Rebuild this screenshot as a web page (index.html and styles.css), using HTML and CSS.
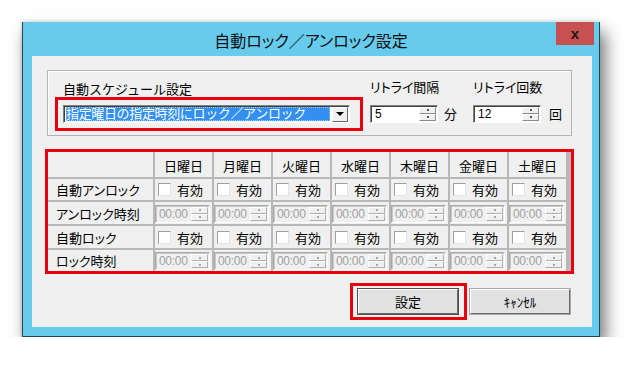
FILE: index.html
```html
<!DOCTYPE html>
<html lang="ja">
<head>
    <meta charset="UTF-8">
    <title>自動ロック／アンロック設定</title>
    <link rel="stylesheet" href="styles.css">
</head>
<body>
<div class="window">
    <div class="titlebar">
        <span class="title">自動ロック／アンロック設定</span>
        <span class="close">x</span>
    </div>
    <div class="client">
        <div class="group">
            <div class="sched">
                <div class="label sched-label">自動スケジュール設定</div>
                <div class="mark mark-select">
                    <div class="select">
                        <span class="select-value">指定曜日の指定時刻にロック／アンロック</span>
                        <span class="select-arrow"></span>
                    </div>
                </div>
            </div>
            <div class="retry">
                <div class="label">リトライ間隔</div>
                <div class="retry-row">
                    <div class="spin spin-retry">
                        <span class="spin-value">5</span>
                        <span class="spin-btns"><i></i><i></i></span>
                    </div>
                    <span class="unit">分</span>
                </div>
            </div>
            <div class="retry retry-count">
                <div class="label">リトライ回数</div>
                <div class="retry-row">
                    <div class="spin spin-retry">
                        <span class="spin-value">12</span>
                        <span class="spin-btns"><i></i><i></i></span>
                    </div>
                    <span class="unit unit-count">回</span>
                </div>
            </div>
        </div>

        <div class="mark mark-table">
            <div class="grid">
                <div class="cell head"></div>
                <div class="cell head">日曜日</div>
                <div class="cell head">月曜日</div>
                <div class="cell head">火曜日</div>
                <div class="cell head">水曜日</div>
                <div class="cell head">木曜日</div>
                <div class="cell head">金曜日</div>
                <div class="cell head">土曜日</div>

                <div class="cell name">自動アンロック</div>
                <div class="cell check"><span class="box"></span>有効</div>
                <div class="cell check"><span class="box"></span>有効</div>
                <div class="cell check"><span class="box"></span>有効</div>
                <div class="cell check"><span class="box"></span>有効</div>
                <div class="cell check"><span class="box"></span>有効</div>
                <div class="cell check"><span class="box"></span>有効</div>
                <div class="cell check"><span class="box"></span>有効</div>

                <div class="cell name">アンロック時刻</div>
                <div class="cell time"><div class="spin spin-off"><span class="spin-value">00:00</span><span class="spin-btns"><i></i><i></i></span></div></div>
                <div class="cell time"><div class="spin spin-off"><span class="spin-value">00:00</span><span class="spin-btns"><i></i><i></i></span></div></div>
                <div class="cell time"><div class="spin spin-off"><span class="spin-value">00:00</span><span class="spin-btns"><i></i><i></i></span></div></div>
                <div class="cell time"><div class="spin spin-off"><span class="spin-value">00:00</span><span class="spin-btns"><i></i><i></i></span></div></div>
                <div class="cell time"><div class="spin spin-off"><span class="spin-value">00:00</span><span class="spin-btns"><i></i><i></i></span></div></div>
                <div class="cell time"><div class="spin spin-off"><span class="spin-value">00:00</span><span class="spin-btns"><i></i><i></i></span></div></div>
                <div class="cell time"><div class="spin spin-off"><span class="spin-value">00:00</span><span class="spin-btns"><i></i><i></i></span></div></div>

                <div class="cell name">自動ロック</div>
                <div class="cell check"><span class="box"></span>有効</div>
                <div class="cell check"><span class="box"></span>有効</div>
                <div class="cell check"><span class="box"></span>有効</div>
                <div class="cell check"><span class="box"></span>有効</div>
                <div class="cell check"><span class="box"></span>有効</div>
                <div class="cell check"><span class="box"></span>有効</div>
                <div class="cell check"><span class="box"></span>有効</div>

                <div class="cell name">ロック時刻</div>
                <div class="cell time"><div class="spin spin-off"><span class="spin-value">00:00</span><span class="spin-btns"><i></i><i></i></span></div></div>
                <div class="cell time"><div class="spin spin-off"><span class="spin-value">00:00</span><span class="spin-btns"><i></i><i></i></span></div></div>
                <div class="cell time"><div class="spin spin-off"><span class="spin-value">00:00</span><span class="spin-btns"><i></i><i></i></span></div></div>
                <div class="cell time"><div class="spin spin-off"><span class="spin-value">00:00</span><span class="spin-btns"><i></i><i></i></span></div></div>
                <div class="cell time"><div class="spin spin-off"><span class="spin-value">00:00</span><span class="spin-btns"><i></i><i></i></span></div></div>
                <div class="cell time"><div class="spin spin-off"><span class="spin-value">00:00</span><span class="spin-btns"><i></i><i></i></span></div></div>
                <div class="cell time"><div class="spin spin-off"><span class="spin-value">00:00</span><span class="spin-btns"><i></i><i></i></span></div></div>
            </div>
        </div>

        <div class="actions">
            <div class="mark mark-btn"><button class="btn btn-default">設定</button></div>
            <button class="btn">ｷｬﾝｾﾙ</button>
        </div>
    </div>
</div>
</body>
</html>
```

FILE: styles.css
```css
body {
    margin: 0;
    background-color: #fff;
    font-family: "Liberation Sans", "Noto Sans CJK JP", sans-serif;
    font-size: 13px;
    color: #000;
}

.window {
    position: relative;
    display: flex;
    flex-direction: column;
    width: 576px;
    height: 314px;
    margin: 22px 0 0 22px;
    background-color: #66cbec;
    border: 1px solid #274653;
    border-top: none;
    box-shadow: 5px 10px 16px rgba(0, 0, 0, 0.55), -1px -1px 3px rgba(0, 0, 0, 0.12);
}

.titlebar {
    height: 34px;
    display: flex;
    align-items: center;
    justify-content: center;
}

.title {
    font-size: 16px;
    font-feature-settings: "palt";
    color: #111;
    margin-top: 2px;
}

.close {
    position: absolute;
    top: 0;
    right: 5px;
    width: 38px;
    height: 23px;
    background-color: #c75050;
    color: #1a1a1a;
    font-weight: bold;
    font-size: 15px;
    display: flex;
    align-items: center;
    justify-content: center;
}

.client {
    height: 271px;
    margin: 0 7px 9px 9px;
    padding: 14px 20px 0 15px;
    box-sizing: border-box;
    background-color: #f0f0f0;
}

/* スケジュール設定グループ */
.group {
    height: 66px;
    box-sizing: border-box;
    border: 1px solid #b4b4b4;
    box-shadow: inset 1px 1px 0 #fff;
    display: flex;
    align-items: flex-end;
    padding: 0 0 4px 7px;
}

.label {
    height: 17px;
    line-height: 17px;
    margin-bottom: 1px;
    font-feature-settings: "palt";
}

.sched-label {
    margin-left: 8px;
    margin-bottom: -1px;
    font-feature-settings: normal;
}

.mark {
    border: 3px solid #e8000d;
}

.mark-select {
    width: 287px;
    padding: 5px 10px 5px 5px;
}

.select {
    height: 18px;
    box-sizing: border-box;
    display: flex;
    align-items: center;
    justify-content: space-between;
    background-color: #fff;
    border: 1px solid;
    border-color: #828282 #fff #fff #828282;
    box-shadow: inset 1px 1px 0 #404040;
    padding: 0 1px 0 2px;
}

.select-value {
    width: 264px;
    height: 14px;
    line-height: 14px;
    background-color: #3390f0;
    color: #fff;
    letter-spacing: -0.35px;
    white-space: nowrap;
    overflow: hidden;
    outline: 1px dotted #9cc8f5;
    outline-offset: -1px;
}

.select-arrow {
    width: 16px;
    height: 15px;
    box-sizing: border-box;
    background-color: #f0f0f0;
    border: 1px solid;
    border-color: #fff #696969 #696969 #fff;
    display: flex;
    align-items: center;
    justify-content: center;
}

.select-arrow::after {
    content: "";
    border-left: 4px solid transparent;
    border-right: 4px solid transparent;
    border-top: 4px solid #000;
}

.retry {
    margin-left: 7px;
    padding-bottom: 8px;
}

.retry-count {
    margin-left: 16px;
}

.retry-row {
    display: flex;
    align-items: center;
    margin-top: 8px;
}

.unit {
    margin-left: 6px;
}

.unit-count {
    margin-left: 8px;
}

/* スピンボックス */
.spin {
    display: flex;
    align-items: stretch;
    height: 18px;
    box-sizing: border-box;
    background-color: #fff;
    border: 1px solid;
    border-color: #828282 #fff #fff #828282;
    box-shadow: inset 1px 1px 0 #404040;
    padding: 1px;
}

.spin-retry {
    width: 68px;
}

.spin-value {
    flex: 1;
    padding-left: 3px;
    line-height: 15px;
    font-size: 12px;
}

.spin-btns {
    width: 17px;
    display: flex;
    flex-direction: column;
}

.spin-btns i {
    flex: 1;
    background-color: #f0f0f0;
    border: 1px solid;
    border-color: #fff #8a8a8a #8a8a8a #fff;
    display: flex;
    align-items: center;
    justify-content: center;
}

.spin-btns i::after {
    content: "";
    width: 2px;
    height: 2px;
    background-color: #555;
}

.spin-off {
    width: 55px;
    background-color: #f0f0f0;
    border-color: #a8a8a8 #fff #fff #a8a8a8;
    box-shadow: inset 1px 1px 0 #c8c8c8;
}

.spin-off .spin-value {
    color: #a0a0a0;
    padding-left: 2px;
    letter-spacing: -0.3px;
}

.spin-off .spin-btns i {
    border-color: #fff #b0b0b0 #b0b0b0 #fff;
}

.spin-off .spin-btns i::after {
    background-color: #a8a8a8;
}

/* 曜日テーブル */
.mark-table {
    margin: 13px -2px 0 -2px;
}

.grid {
    display: grid;
    grid-template-columns: 105px repeat(7, 57px);
    grid-template-rows: 25px 21px 22px 22px 21px;
    gap: 2px;
    background-color: #b8b8b8;
}

.cell {
    background-color: #f0f0f0;
    display: flex;
    align-items: center;
    font-feature-settings: "palt";
}

.head {
    justify-content: center;
    padding-top: 1px;
}

.name {
    padding-left: 8px;
}

.check {
    padding-left: 3px;
}

.box {
    width: 13px;
    height: 13px;
    box-sizing: border-box;
    background-color: #fff;
    border: 1px solid;
    border-color: #a0a0a0 #e3e3e3 #e3e3e3 #a0a0a0;
    margin-right: 6px;
}

.time {
    padding-top: 1px;
}

/* ボタン */
.actions {
    display: flex;
    justify-content: flex-end;
    align-items: center;
    gap: 3px;
    margin: 9px 2px 0 0;
}

.mark-btn {
    padding: 3px 6px 3px 5px;
}

.btn {
    width: 100px;
    height: 25px;
    box-sizing: border-box;
    background-color: #e1e1e1;
    border: 1px solid;
    border-color: #fff #6b6b6b #6b6b6b #fff;
    box-shadow: 0 0 0 1px #a8a8a8;
    font-family: "Liberation Sans", "Noto Sans CJK JP", sans-serif;
    font-size: 13px;
    color: #000;
    padding: 0;
}

.btn-default {
    box-shadow: 0 0 0 1px #505050;
}
```
